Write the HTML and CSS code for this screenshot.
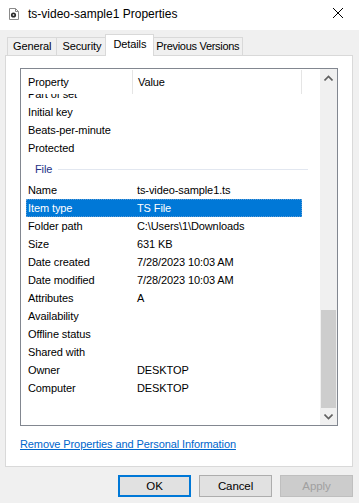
FILE: index.html
```html
<!DOCTYPE html>
<html>
<head>
  <title>ts-video-sample1 Properties</title>
  <link rel="stylesheet" href="styles.css">
</head>
<body>
  <div class="titlebar">
    <svg class="file-icon" width="10" height="12" viewBox="0 0 10 12">
      <path d="M0.5 0.5h6l3 3v8h-9z" fill="#fff" stroke="#8a8a8a"/>
      <path d="M6.5 0.5v3h3" fill="none" stroke="#8a8a8a"/>
      <circle cx="4.5" cy="7" r="2.6" fill="#2b2b2b"/>
      <circle cx="4.5" cy="7" r="0.9" fill="#d0d0d0"/>
    </svg>
    <span class="title">ts-video-sample1 Properties</span>
    <svg class="close" width="10" height="10" viewBox="0 0 10 10">
      <path d="M0 0L10 10M10 0L0 10" stroke="#000" stroke-width="1"/>
    </svg>
  </div>

  <div class="window">
    <div class="tabs">
      <div class="tab">General</div>
      <div class="tab">Security</div>
      <div class="tab active">Details</div>
      <div class="tab tab-wide">Previous Versions</div>
    </div>

    <div class="panel">
      <div class="listview">
        <div class="list-main">
          <div class="list-header">
            <div class="col-prop">Property</div>
            <div class="col-val">Value</div>
          </div>
          <div class="list-viewport">
            <div class="list-rows">
              <div class="row"><span class="cell-prop">Part of set</span><span class="cell-val"></span></div>
              <div class="row"><span class="cell-prop">Initial key</span><span class="cell-val"></span></div>
              <div class="row"><span class="cell-prop">Beats-per-minute</span><span class="cell-val"></span></div>
              <div class="row"><span class="cell-prop">Protected</span><span class="cell-val"></span></div>
              <div class="group"><span class="group-name">File</span><span class="group-line"></span></div>
              <div class="row"><span class="cell-prop">Name</span><span class="cell-val">ts-video-sample1.ts</span></div>
              <div class="row selected"><span class="cell-prop">Item type</span><span class="cell-val">TS File</span></div>
              <div class="row"><span class="cell-prop">Folder path</span><span class="cell-val">C:\Users\1\Downloads</span></div>
              <div class="row"><span class="cell-prop">Size</span><span class="cell-val">631 KB</span></div>
              <div class="row"><span class="cell-prop">Date created</span><span class="cell-val">7/28/2023 10:03 AM</span></div>
              <div class="row"><span class="cell-prop">Date modified</span><span class="cell-val">7/28/2023 10:03 AM</span></div>
              <div class="row"><span class="cell-prop">Attributes</span><span class="cell-val">A</span></div>
              <div class="row"><span class="cell-prop">Availability</span><span class="cell-val"></span></div>
              <div class="row"><span class="cell-prop">Offline status</span><span class="cell-val"></span></div>
              <div class="row"><span class="cell-prop">Shared with</span><span class="cell-val"></span></div>
              <div class="row"><span class="cell-prop">Owner</span><span class="cell-val">DESKTOP</span></div>
              <div class="row"><span class="cell-prop">Computer</span><span class="cell-val">DESKTOP</span></div>
            </div>
          </div>
        </div>
        <div class="scrollbar">
          <div class="sb-arrow">
            <svg width="9" height="6" viewBox="0 0 9 6"><path d="M0.5 5.5L4.5 1.5L8.5 5.5" fill="none" stroke="#606060" stroke-width="1.6"/></svg>
          </div>
          <div class="sb-track"></div>
          <div class="sb-thumb"></div>
          <div class="sb-arrow">
            <svg width="9" height="6" viewBox="0 0 9 6"><path d="M0.5 0.5L4.5 4.5L8.5 0.5" fill="none" stroke="#606060" stroke-width="1.6"/></svg>
          </div>
        </div>
      </div>
      <a class="remove-link" href="#">Remove Properties and Personal Information</a>
    </div>

    <div class="buttons">
      <button class="btn btn-default">OK</button>
      <button class="btn">Cancel</button>
      <button class="btn" disabled>Apply</button>
    </div>
  </div>
</body>
</html>
```

FILE: styles.css
```css
body {
    margin: 0;
    width: 359px;
    height: 503px;
    background-color: #f0f0f0;
    font-family: 'Liberation Sans', Arial, sans-serif;
    font-size: 11px;
    letter-spacing: -0.1px;
    color: #000;
    overflow: hidden;
  }

  .titlebar {
    height: 30px;
    background-color: #fff;
    display: flex;
    align-items: center;
  }

  .file-icon {
    margin-left: 9px;
    margin-top: -2px;
  }

  .title {
    margin-left: 9px;
    font-size: 12px;
    letter-spacing: 0;
    margin-top: -3px;
  }

  .close {
    margin-left: auto;
    margin-right: 16px;
    margin-top: -4px;
  }

  .window {
    padding: 4px 6px 0 5px;
  }

  .tabs {
    display: flex;
    padding-left: 3px;
    height: 21px;
    align-items: flex-end;
  }

  .tab {
    height: 18px;
    line-height: 17px;
    padding: 0 5px 0 5px;
    border: 1px solid #d9d9d9;
    border-bottom: none;
    margin-left: -1px;
    box-sizing: border-box;
    background-color: #f0f0f0;
  }

  .tab-wide {
    padding: 0 3px 0 4px;
    letter-spacing: -0.3px;
  }

  .tab.active {
    height: 22px;
    line-height: 19px;
    background-color: #fff;
    position: relative;
    top: 1px;
    z-index: 1;
    padding: 0 7px 0 7px;
    margin-left: -2px;
    margin-right: -2px;
  }

  .panel {
    background-color: #fff;
    border: 1px solid #d9d9d9;
    height: 412px;
    box-sizing: border-box;
    padding: 12px 14px 0 14px;
  }

  .listview {
    border: 1px solid #828790;
    height: 358px;
    box-sizing: border-box;
    display: flex;
  }

  .list-main {
    flex: 1;
    display: flex;
    flex-direction: column;
    min-width: 0;
  }

  .list-header {
    display: flex;
    height: 25px;
    align-items: center;
    flex-shrink: 0;
  }

  .col-prop {
    width: 112px;
    padding-left: 7px;
    box-sizing: border-box;
    border-right: 1px solid #e5e5e5;
    line-height: 24px;
  }

  .col-val {
    width: 169px;
    padding-left: 5px;
    box-sizing: border-box;
    border-right: 1px solid #e5e5e5;
    line-height: 24px;
  }

  .list-viewport {
    flex: 1;
    overflow: hidden;
  }

  .list-rows {
    margin-top: -9px;
  }

  .row {
    display: flex;
    height: 18px;
    line-height: 18px;
    width: 276px;
    margin-left: 5px;
    box-sizing: border-box;
  }

  .cell-prop {
    width: 111px;
    padding-left: 2px;
    box-sizing: border-box;
    white-space: nowrap;
  }

  .cell-val {
    white-space: nowrap;
  }

  .row.selected {
    background-color: #0078d7;
    color: #fff;
    outline: 1px dotted #5a9bd5;
    outline-offset: -1px;
  }

  .group {
    display: flex;
    align-items: center;
    height: 24px;
    margin-left: 14px;
    width: 273px;
  }

  .group-name {
    color: #1e3287;
  }

  .group-line {
    flex: 1;
    height: 1px;
    background-color: #e2e7f0;
    margin-left: 6px;
  }

  .scrollbar {
    width: 17px;
    background-color: #f0f0f0;
    display: flex;
    flex-direction: column;
  }

  .sb-arrow {
    height: 17px;
    display: flex;
    align-items: center;
    justify-content: center;
  }

  .sb-track {
    flex: 1;
  }

  .sb-thumb {
    height: 98px;
    margin: 0 1px;
    background-color: #cdcdcd;
  }

  .remove-link {
    display: inline-block;
    margin-top: 12px;
    color: #0066cc;
    text-decoration: underline;
  }

  .buttons {
    display: flex;
    justify-content: flex-end;
    gap: 8px;
    margin-top: 8px;
  }

  .btn {
    width: 73px;
    height: 22px;
    font-family: 'Liberation Sans', Arial, sans-serif;
    font-size: 11.5px;
    letter-spacing: -0.1px;
    background-color: #e1e1e1;
    border: 1px solid #adadad;
    color: #000;
    padding: 0;
  }

  .btn-default {
    border: 2px solid #0078d7;
  }

  .btn:disabled {
    background-color: #cccccc;
    border-color: #bfbfbf;
    color: #a0a0a0;
  }
```
